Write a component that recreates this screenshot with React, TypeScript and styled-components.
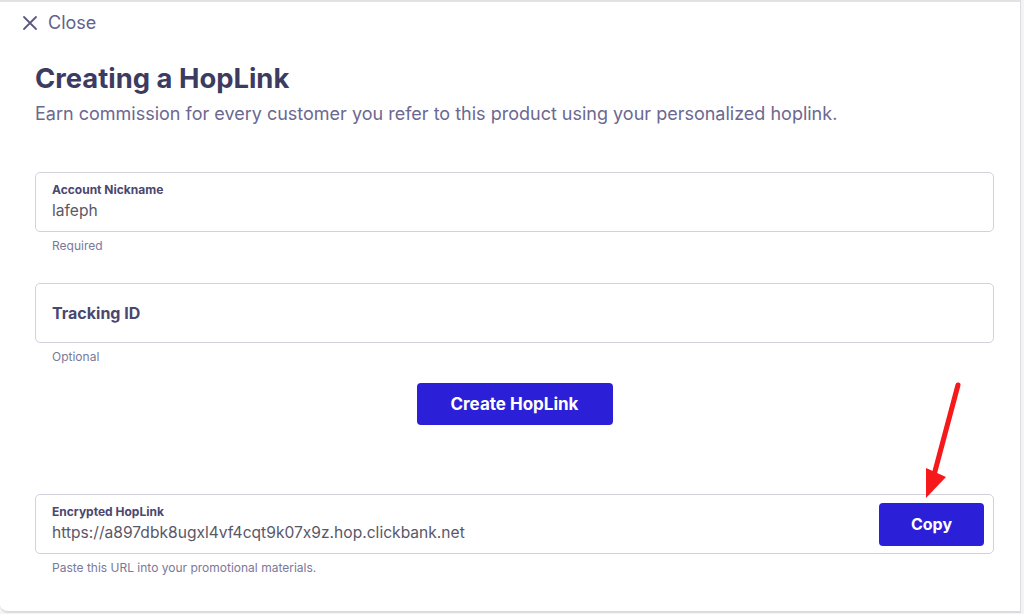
import React from "react";
import styled, { createGlobalStyle } from "styled-components";

const GlobalStyle = createGlobalStyle`
  html, body {
    margin: 0;
    padding: 0;
    background: #f4f4f6;
  }
  body {
    font-family: Inter, "Open Sans", Arial, sans-serif;
    font-feature-settings: "calt" 0;
  }
`;

const Panel = styled.div`
  position: relative;
  box-sizing: border-box;
  width: 1021px;
  height: 613px;
  background: #fff;
  border-top: 2px solid #e2e2e4;
  border-right: 1px solid #dcdce0;
  border-bottom: 2px solid #dcdce0;
  border-bottom-left-radius: 8px;
  padding: 10px 26px 0 35px;
`;

const CloseButton = styled.button`
  display: flex;
  align-items: center;
  gap: 10px;
  margin-left: -13px;
  padding: 0;
  border: 0;
  background: none;
  color: #64618a;
  font-family: inherit;
  font-size: 18px;
  cursor: pointer;
`;

const Title = styled.h1`
  margin: 28px 0 0;
  font-size: 27.4px;
  font-weight: 700;
  color: #3d3b5f;
  line-height: 34px;
`;

const Subtitle = styled.p`
  margin: 7px 0 0;
  font-size: 18px;
  color: #6b6891;
  line-height: 24px;
`;

const Field = styled.div<{ $top: number }>`
  margin-top: ${(p) => p.$top}px;
`;

const Box = styled.div`
  box-sizing: border-box;
  height: 60px;
  border: 1px solid #d3d2dc;
  border-radius: 5px;
  display: flex;
  align-items: center;
  padding: 0 9px 0 16px;
`;

const BoxText = styled.div`
  flex: 1;
  display: flex;
  flex-direction: column;
`;

const Label = styled.span`
  font-size: 12px;
  font-weight: 700;
  color: #4a4770;
  line-height: 15px;
`;

const Value = styled.span`
  font-size: 15.6px;
  color: #5a5868;
  line-height: 22px;
  margin-top: 3px;
`;

const Placeholder = styled.span`
  font-size: 16px;
  font-weight: 700;
  color: #4a4770;
`;

const Hint = styled.div`
  margin: 6px 0 0 17px;
  font-size: 12px;
  color: #7b7899;
  line-height: 16px;
`;

const Center = styled.div`
  display: flex;
  justify-content: center;
  margin-top: 18px;
`;

const PrimaryButton = styled.button<{ $w: number; $h: number; $size: number }>`
  width: ${(p) => p.$w}px;
  height: ${(p) => p.$h}px;
  border: 0;
  border-radius: 4px;
  background: #2b1fd8;
  color: #fff;
  font-family: inherit;
  font-size: ${(p) => p.$size}px;
  font-weight: 700;
  cursor: pointer;
`;

const Arrow = styled.svg`
  position: absolute;
  left: 915px;
  top: 378px;
  width: 52px;
  height: 122px;
  overflow: visible;
`;

export default function App() {
  return (
    <>
      <GlobalStyle />
      <Panel>
        <CloseButton>
          <svg width="16" height="16" viewBox="0 0 16 16">
            <path d="M2 2L14 14M14 2L2 14" stroke="#5b5882" strokeWidth="1.8" strokeLinecap="round" />
          </svg>
          Close
        </CloseButton>
        <Title>Creating a HopLink</Title>
        <Subtitle>Earn commission for every customer you refer to this product using your personalized hoplink.</Subtitle>

        <Field $top={46}>
          <Box>
            <BoxText>
              <Label>Account Nickname</Label>
              <Value>lafeph</Value>
            </BoxText>
          </Box>
          <Hint>Required</Hint>
        </Field>

        <Field $top={29}>
          <Box>
            <Placeholder>Tracking ID</Placeholder>
          </Box>
          <Hint>Optional</Hint>
        </Field>

        <Center>
          <PrimaryButton $w={196} $h={42} $size={17}>Create HopLink</PrimaryButton>
        </Center>

        <Field $top={69}>
          <Box>
            <BoxText>
              <Label>Encrypted HopLink</Label>
              <Value>https://a897dbk8ugxl4vf4cqt9k07x9z.hop.clickbank.net</Value>
            </BoxText>
            <PrimaryButton $w={105} $h={43} $size={16}>Copy</PrimaryButton>
          </Box>
          <Hint>Paste this URL into your promotional materials.</Hint>
        </Field>

        <Arrow viewBox="0 0 52 122">
          <path d="M43 5L19 95" stroke="#f5191b" strokeWidth="5" strokeLinecap="round" />
          <path d="M11 88L31 97L11 118Z" fill="#f5191b" />
        </Arrow>
      </Panel>
    </>
  );
}
